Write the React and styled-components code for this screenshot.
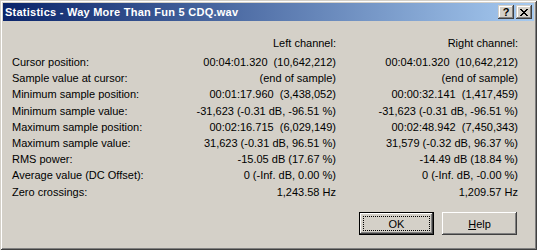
import React from "react";
import styled, { createGlobalStyle } from "styled-components";

const rows = [
  ["Cursor position:", "00:04:01.320  (10,642,212)", "00:04:01.320  (10,642,212)"],
  ["Sample value at cursor:", "(end of sample)", "(end of sample)"],
  ["Minimum sample position:", "00:01:17.960  (3,438,052)", "00:00:32.141  (1,417,459)"],
  ["Minimum sample value:", "-31,623 (-0.31 dB, -96.51 %)", "-31,623 (-0.31 dB, -96.51 %)"],
  ["Maximum sample position:", "00:02:16.715  (6,029,149)", "00:02:48.942  (7,450,343)"],
  ["Maximum sample value:", "31,623 (-0.31 dB, 96.51 %)", "31,579 (-0.32 dB, 96.37 %)"],
  ["RMS power:", "-15.05 dB (17.67 %)", "-14.49 dB (18.84 %)"],
  ["Average value (DC Offset):", "0 (-Inf. dB, 0.00 %)", "0 (-Inf. dB, -0.00 %)"],
  ["Zero crossings:", "1,243.58 Hz", "1,209.57 Hz"],
];

class App extends React.Component {
  render() {
    return (
      <>
        <GlobalStyle />
        <Window>
          <TitleBar>
            <Title>Statistics - Way More Than Fun 5 CDQ.wav</Title>
            <CaptionButtons>
              <CaptionButton>?</CaptionButton>
              <CaptionButton>
                <svg width="8" height="7" viewBox="0 0 8 7" shapeRendering="crispEdges">
                  <path d="M0 0h2v1H0zM6 0h2v1H6zM1 1h2v1H1zM5 1h2v1H5zM2 2h4v1H2zM3 3h2v1H3zM2 4h4v1H2zM1 5h2v1H1zM5 5h2v1H5zM0 6h2v1H0zM6 6h2v1H6z" fill="#000" />
                </svg>
              </CaptionButton>
            </CaptionButtons>
          </TitleBar>
          <Body>
            <StatsGrid>
              <span />
              <Heading>Left channel:</Heading>
              <Heading>Right channel:</Heading>
              {rows.map(([label, left, right]) => (
                <React.Fragment key={label}>
                  <Label>{label}</Label>
                  <Value>{left}</Value>
                  <Value>{right}</Value>
                </React.Fragment>
              ))}
            </StatsGrid>
            <Footer>
              <Button $default>
                OK
              </Button>
              <Button>
                <u>H</u>elp
              </Button>
            </Footer>
          </Body>
        </Window>
      </>
    );
  }
}

const GlobalStyle = createGlobalStyle`
  html, body {
    margin: 0;
    padding: 0;
    background: #d4d0c8;
  }
  body {
    font-family: "Liberation Sans", Arial, sans-serif;
  }
`;

const Window = styled.div`
  width: 537px;
  height: 250px;
  box-sizing: border-box;
  padding: 3px;
  display: flex;
  flex-direction: column;
  background: #d4d0c8;
  box-shadow: inset 1px 1px 0 #d4d0c8, inset -1px -1px 0 #404040,
    inset 2px 2px 0 #ffffff, inset -2px -2px 0 #808080;
`;

const TitleBar = styled.div`
  height: 18px;
  display: flex;
  align-items: center;
  padding: 0 2px;
  background: linear-gradient(to right, #0a246a, #a6caf0);
`;

const Title = styled.div`
  color: #fff;
  font: bold 11px "Liberation Sans", Arial, sans-serif;
  letter-spacing: 0.25px;
  white-space: nowrap;
`;

const CaptionButtons = styled.div`
  margin-left: auto;
  display: flex;
  gap: 2px;
`;

const CaptionButton = styled.div`
  width: 16px;
  height: 14px;
  box-sizing: border-box;
  display: flex;
  align-items: center;
  justify-content: center;
  background: #d4d0c8;
  color: #000;
  font: bold 11px "Liberation Sans", Arial, sans-serif;
  box-shadow: inset -1px -1px 0 #404040, inset 1px 1px 0 #d4d0c8,
    inset -2px -2px 0 #808080, inset 2px 2px 0 #ffffff;
`;

const Body = styled.div`
  flex: 1;
  display: flex;
  flex-direction: column;
  padding: 14px 17px 12px 9px;
  font: 11px "Liberation Sans", Arial, sans-serif;
  color: #000;
`;

const StatsGrid = styled.div`
  display: grid;
  grid-template-columns: 150px 174px 182px;
  grid-template-rows: 19px repeat(9, 16.2px);
  line-height: 16px;
`;

const Heading = styled.span`
  text-align: right;
  align-self: start;
`;

const Label = styled.span`
  white-space: nowrap;
`;

const Value = styled.span`
  text-align: right;
  white-space: pre;
`;

const Footer = styled.div`
  margin-top: auto;
  display: flex;
  justify-content: flex-end;
  gap: 8px;
`;

const Button = styled.button`
  position: relative;
  width: 75px;
  height: 23px;
  box-sizing: border-box;
  padding: 0;
  font: 11px "Liberation Sans", Arial, sans-serif;
  color: #000;
  background: #d4d0c8;
  border: ${(p) => (p.$default ? "1px solid #000" : "none")};
  box-shadow: inset -1px -1px 0 #404040, inset 1px 1px 0 #ffffff,
    inset -2px -2px 0 #808080, inset 2px 2px 0 #d4d0c8;

  &::after {
    content: "";
    display: ${(p) => (p.$default ? "block" : "none")};
    position: absolute;
    inset: 3px;
    border: 1px dotted #000;
  }
`;

export default App;
